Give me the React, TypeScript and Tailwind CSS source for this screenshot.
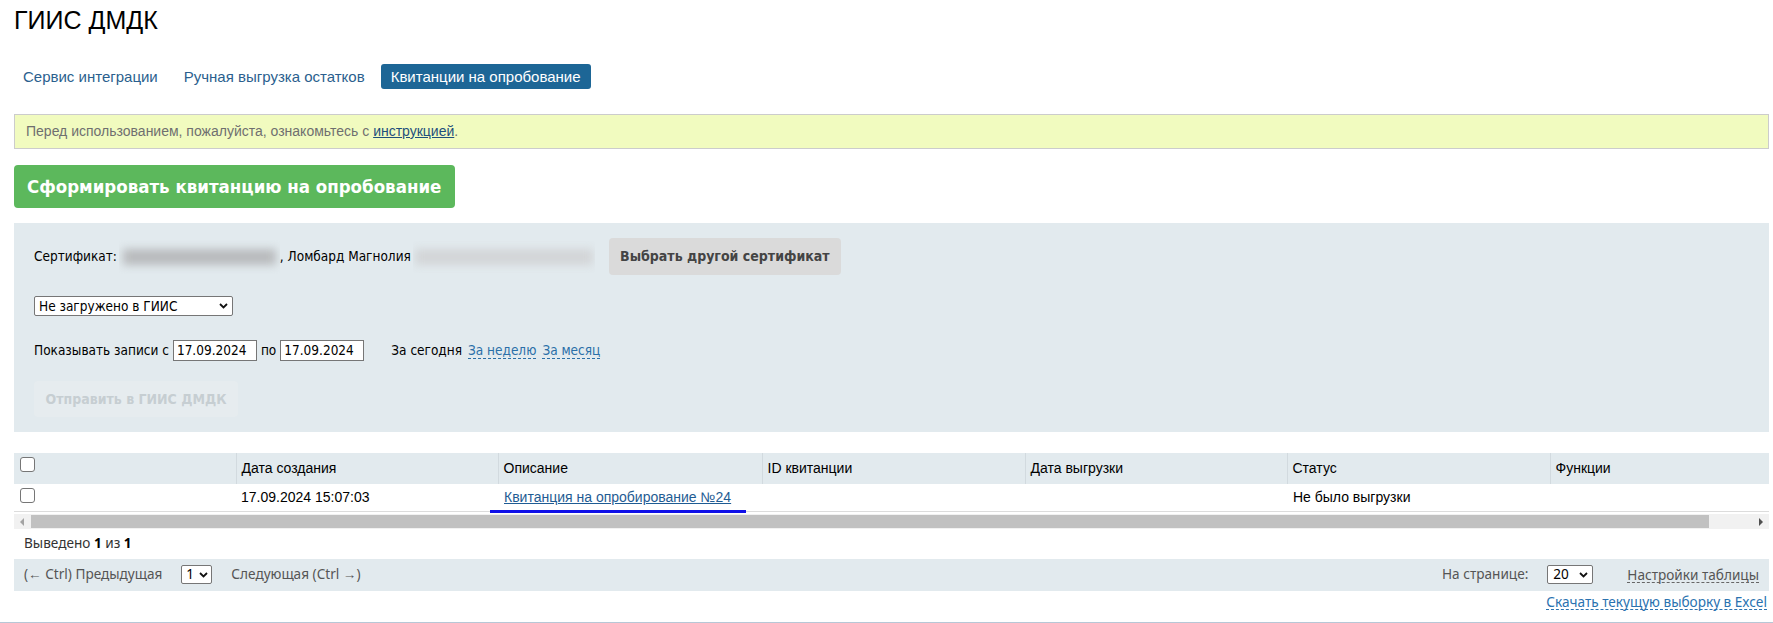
import React from "react";

const Chevron = () => (
  <svg width="9" height="6" viewBox="0 0 9 6" className="shrink-0">
    <path d="M1 1l3.5 3.5L8 1" fill="none" stroke="#111" strokeWidth="1.8" />
  </svg>
);

const Box = () => (
  <span className="inline-block w-[15px] h-[15px] rounded-[3px] border border-[#767676] bg-white" />
);

export default function App() {
  return (
    <div className="bg-white min-h-[623px] w-[1773px] overflow-hidden text-[#222]">
      <div className="pl-[14px] pr-[4px]">
        {/* Title */}
        <div className="pt-[2px] h-[38px] leading-[36px] text-[25px] text-black font-['Liberation_Sans',Arial,sans-serif]">
          ГИИС ДМДК
        </div>
        {/* Tabs */}
        <div className="mt-[26px] flex gap-[6px] font-['Liberation_Sans',Arial,sans-serif] text-[15px]">
          <span className="h-[25px] leading-[25px] pl-[9px] pr-[10px] text-[#2b5f8e]">Сервис интеграции</span>
          <span className="h-[25px] leading-[25px] px-[10px] text-[#2b5f8e]">Ручная выгрузка остатков</span>
          <span className="h-[25px] leading-[25px] px-[10px] rounded-[3px] bg-[#1d6696] text-white">Квитанции на опробование</span>
        </div>
        {/* Alert */}
        <div className="mt-[25px] h-[35px] border border-[#cccccc] bg-[#f1fbbf] pl-[11px] flex items-center text-[14px] text-[#6f6f6f] font-['Liberation_Sans',Arial,sans-serif]">
          <span>
            Перед использованием, пожалуйста, ознакомьтесь с{" "}
            <a className="underline text-[#1f4f7c]">инструкцией</a>.
          </span>
        </div>
        {/* Green button */}
        <div className="mt-[16px]">
          <button className="h-[43px] w-[441px] rounded-[4px] bg-[#5cb85c] text-white font-bold text-[18.5px] text-left pl-[13px] font-['DejaVu_Sans_Condensed','DejaVu_Sans',sans-serif]">
            Сформировать квитанцию на опробование
          </button>
        </div>
        {/* Filter panel */}
        <div className="mt-[15px] bg-[#e2eaee] pl-[20px] pt-[15px] pb-[15px] text-[13.5px] text-black font-['DejaVu_Sans_Condensed','DejaVu_Sans',sans-serif]">
          <div className="flex items-center h-[37px]">
            <span>Сертификат:</span>
            <span className="relative ml-[2px] w-[161px] h-[34px] overflow-hidden">
              <span className="absolute left-[4px] right-[4px] top-[9px] h-[16px] bg-[#b9bbbd] blur-[4px]" />
            </span>
            <span>, Ломбард Магнолия</span>
            <span className="relative ml-[2px] w-[182px] h-[32px] overflow-hidden">
              <span className="absolute left-[2px] right-[2px] top-[8px] h-[16px] bg-[#d3d5d7] blur-[4px]" />
            </span>
            <button className="ml-[14px] h-[37px] w-[232px] rounded-[4px] bg-[#dadada] text-[#444] font-bold text-[14px]">
              Выбрать другой сертификат
            </button>
          </div>
          <div className="mt-[21px]">
            <div className="w-[199px] h-[20px] bg-white border border-[#767676] rounded-[2px] flex items-center justify-between pl-[4px] pr-[4px]">
              <span>Не загружено в ГИИС</span>
              <Chevron />
            </div>
          </div>
          <div className="mt-[24px] flex items-center h-[21px]">
            <span>Показывать записи с</span>
            <span className="ml-[4px] w-[84px] h-[21px] bg-white border border-[#767676] pl-[3px] leading-[19px]">17.09.2024</span>
            <span className="ml-[4px]">по</span>
            <span className="ml-[4px] w-[84px] h-[21px] bg-white border border-[#767676] pl-[3px] leading-[19px]">17.09.2024</span>
            <span className="ml-[27px]">За сегодня</span>
            <span className="ml-[6px] text-[#2a6fa8] border-b border-dashed border-[#2a6fa8] leading-[15px]">За неделю</span>
            <span className="ml-[6px] text-[#2a6fa8] border-b border-dashed border-[#2a6fa8] leading-[15px]">За месяц</span>
          </div>
          <div className="mt-[20px]">
            <button className="h-[36px] w-[204px] rounded-[4px] bg-[#e6ecef] text-[#c6ced2] font-bold text-[14px]">
              Отправить в ГИИС ДМДК
            </button>
          </div>
        </div>
        {/* Table */}
        <div className="mt-[21px]">
          <table className="w-full table-fixed border-collapse text-[14px] text-black font-['Liberation_Sans',Arial,sans-serif]">
            <colgroup>
              <col className="w-[222px]" />
              <col className="w-[262px]" />
              <col className="w-[264px]" />
              <col className="w-[263px]" />
              <col className="w-[262px]" />
              <col className="w-[263px]" />
              <col />
            </colgroup>
            <thead>
              <tr className="h-[31px] bg-[#e2eaee]">
                <th className="text-left font-normal align-top pt-[4px] pl-[6px] leading-none"><Box /></th>
                <th className="text-left font-normal pl-[5px] border-l border-[#d2dadf]">Дата создания</th>
                <th className="text-left font-normal pl-[5px] border-l border-[#d2dadf]">Описание</th>
                <th className="text-left font-normal pl-[5px] border-l border-[#d2dadf]">ID квитанции</th>
                <th className="text-left font-normal pl-[5px] border-l border-[#d2dadf]">Дата выгрузки</th>
                <th className="text-left font-normal pl-[5px] border-l border-[#d2dadf]">Статус</th>
                <th className="text-left font-normal pl-[5px] border-l border-[#d2dadf]">Функции</th>
              </tr>
            </thead>
            <tbody>
              <tr className="h-[27px] border-b border-[#dcdcdc]">
                <td className="align-top pt-[4px] pl-[6px] leading-none"><Box /></td>
                <td className="pl-[5px]">17.09.2024 15:07:03</td>
                <td className="pl-[6px] relative whitespace-nowrap">
                  <a className="underline text-[#1f5c93]">Квитанция на опробирование №24</a>
                  <span className="absolute left-[-8px] w-[256px] bottom-[-2px] h-[3px] bg-[#1010e8]" />
                </td>
                <td />
                <td />
                <td className="pl-[6px]">Не было выгрузки</td>
                <td />
              </tr>
            </tbody>
          </table>
          {/* scrollbar */}
          <div className="mt-[2px] h-[15px] bg-[#f1f1f1] relative">
            <span className="absolute left-[6px] top-[4px] w-0 h-0 border-y-[4px] border-y-transparent border-r-[4px] border-r-[#a3a3a3]" />
            <span className="absolute left-[17px] w-[1678px] top-[1px] h-[13px] bg-[#c1c1c1]" />
            <span className="absolute right-[6px] top-[4px] w-0 h-0 border-y-[4px] border-y-transparent border-l-[4px] border-l-[#505050]" />
          </div>
        </div>
        {/* Footer */}
        <div className="font-['Noto_Sans',sans-serif] text-[13.6px]">
          <div className="h-[30px] flex items-center pl-[10px] text-[#333]">
            Выведено&nbsp;<b className="text-black">1</b>&nbsp;из&nbsp;<b className="text-black">1</b>
          </div>
          <div className="h-[32px] bg-[#e2eaee] flex items-center pl-[10px] pr-[10px] text-[#555]">
            <span>(← Ctrl) Предыдущая</span>
            <span className="ml-[19px] w-[31px] h-[19px] bg-white border border-[#767676] rounded-[2px] flex items-center justify-between pl-[4px] pr-[3px] text-black">
              <span>1</span>
              <Chevron />
            </span>
            <span className="ml-[19px]">Следующая (Ctrl →)</span>
            <span className="ml-auto">На странице:</span>
            <span className="ml-[19px] w-[46px] h-[19px] bg-white border border-[#767676] rounded-[2px] flex items-center justify-between pl-[5px] pr-[4px] text-black">
              <span>20</span>
              <Chevron />
            </span>
            <span className="ml-[34px] border-b border-dashed border-[#666] leading-[15px]">Настройки таблицы</span>
          </div>
          <div className="h-[22px] flex items-center justify-end pr-[2px]">
            <span className="text-[#2a72b0] border-b border-dashed border-[#2a72b0] leading-[15px]">Скачать текущую выборку в Excel</span>
          </div>
        </div>
      </div>
      <div className="mt-[9px] h-[2px] bg-[#b7c7d6]" />
    </div>
  );
}
